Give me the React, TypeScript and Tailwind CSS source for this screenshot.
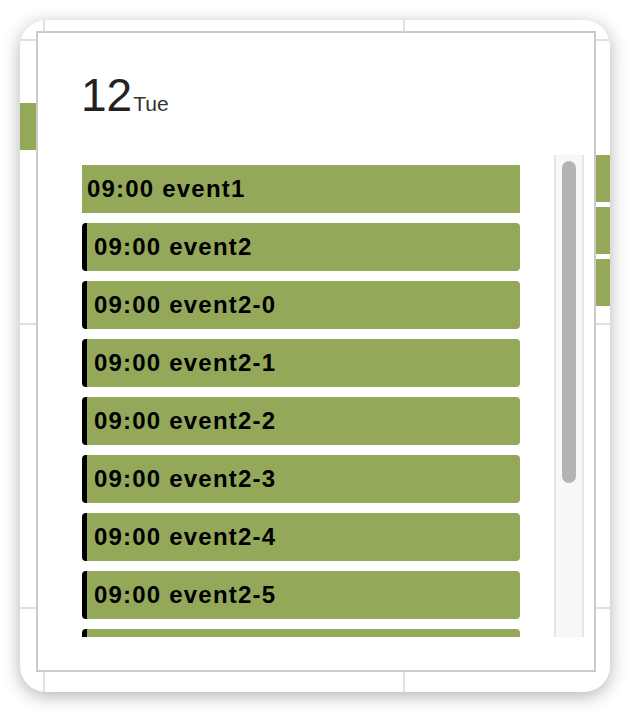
import React from 'react';

const green = 'bg-[#94a85a]';

const events = [
  'event1',
  'event2',
  'event2-0',
  'event2-1',
  'event2-2',
  'event2-3',
  'event2-4',
  'event2-5',
  'event2-6',
];

function EventRow({ title, first }: { title: string; first: boolean }) {
  return (
    <div
      className={`flex h-[48px] shrink-0 items-center ${green} ${
        first ? 'pl-[5px]' : 'rounded-[4px] border-l-[5px] border-black pl-[7px]'
      }`}
    >
      <span className="text-[24px] font-bold leading-none tracking-[1.2px] text-black whitespace-nowrap">
        09:00 {title}
      </span>
    </div>
  );
}

export default function App() {
  return (
    <div
      className="h-[712px] w-[630px] bg-white p-5"
      style={{ fontFamily: '"Liberation Sans", Arial, sans-serif' }}
    >
      <div className="relative h-full overflow-hidden rounded-[26px] bg-white shadow-[0_4px_18px_rgba(0,0,0,0.3)]">
        {/* calendar behind the popup */}
        <div className="grid h-full grid-cols-[25px_360px_1fr] grid-rows-[21px_284px_284px_1fr]">
          <div className="border-b-2 border-r-2 border-[#e0e0e0]" />
          <div className="border-b-2 border-r-2 border-[#e0e0e0]" />
          <div className="border-b-2 border-[#e0e0e0]" />

          <div className="border-b-2 border-r-2 border-[#e0e0e0] pt-[62px]">
            <div className={`h-[47px] ${green}`} />
          </div>
          <div className="border-b-2 border-r-2 border-[#e0e0e0]" />
          <div className="flex flex-col gap-[5px] border-b-2 border-[#e0e0e0] pt-[114px]">
            <div className={`h-[47px] ${green}`} />
            <div className={`h-[47px] ${green}`} />
            <div className={`h-[47px] ${green}`} />
          </div>

          <div className="border-b-2 border-r-2 border-[#e0e0e0]" />
          <div className="border-b-2 border-r-2 border-[#e0e0e0]" />
          <div className="border-b-2 border-[#e0e0e0]" />

          <div className="border-r-2 border-[#e0e0e0]" />
          <div className="border-r-2 border-[#e0e0e0]" />
          <div />
        </div>

        {/* day popup */}
        <div className="absolute left-[16px] top-[11px] flex h-[641px] w-[560px] flex-col border-2 border-[#cbcbcb] bg-white">
          <div className="flex items-baseline pl-[43px] pt-[39px]">
            <span className="text-[46px] leading-[46px] text-[#222]">12</span>
            <span className="ml-[1px] text-[21px] text-[#333]">Tue</span>
          </div>

          <div className="ml-[44px] mt-[35px] flex h-[482px] w-[502px]">
            <div className="flex w-[438px] flex-col gap-[10px] overflow-hidden pt-[10px]">
              {events.map((e, i) => (
                <EventRow key={e} title={e} first={i === 0} />
              ))}
            </div>
            <div className="ml-[34px] h-full w-[30px] border-x-2 border-[#e6e6e6] bg-[#f7f7f7] px-[6px] pt-[6px]">
              <div className="h-[322px] rounded-full bg-[#b3b3b3]" />
            </div>
          </div>
        </div>
      </div>
    </div>
  );
}
